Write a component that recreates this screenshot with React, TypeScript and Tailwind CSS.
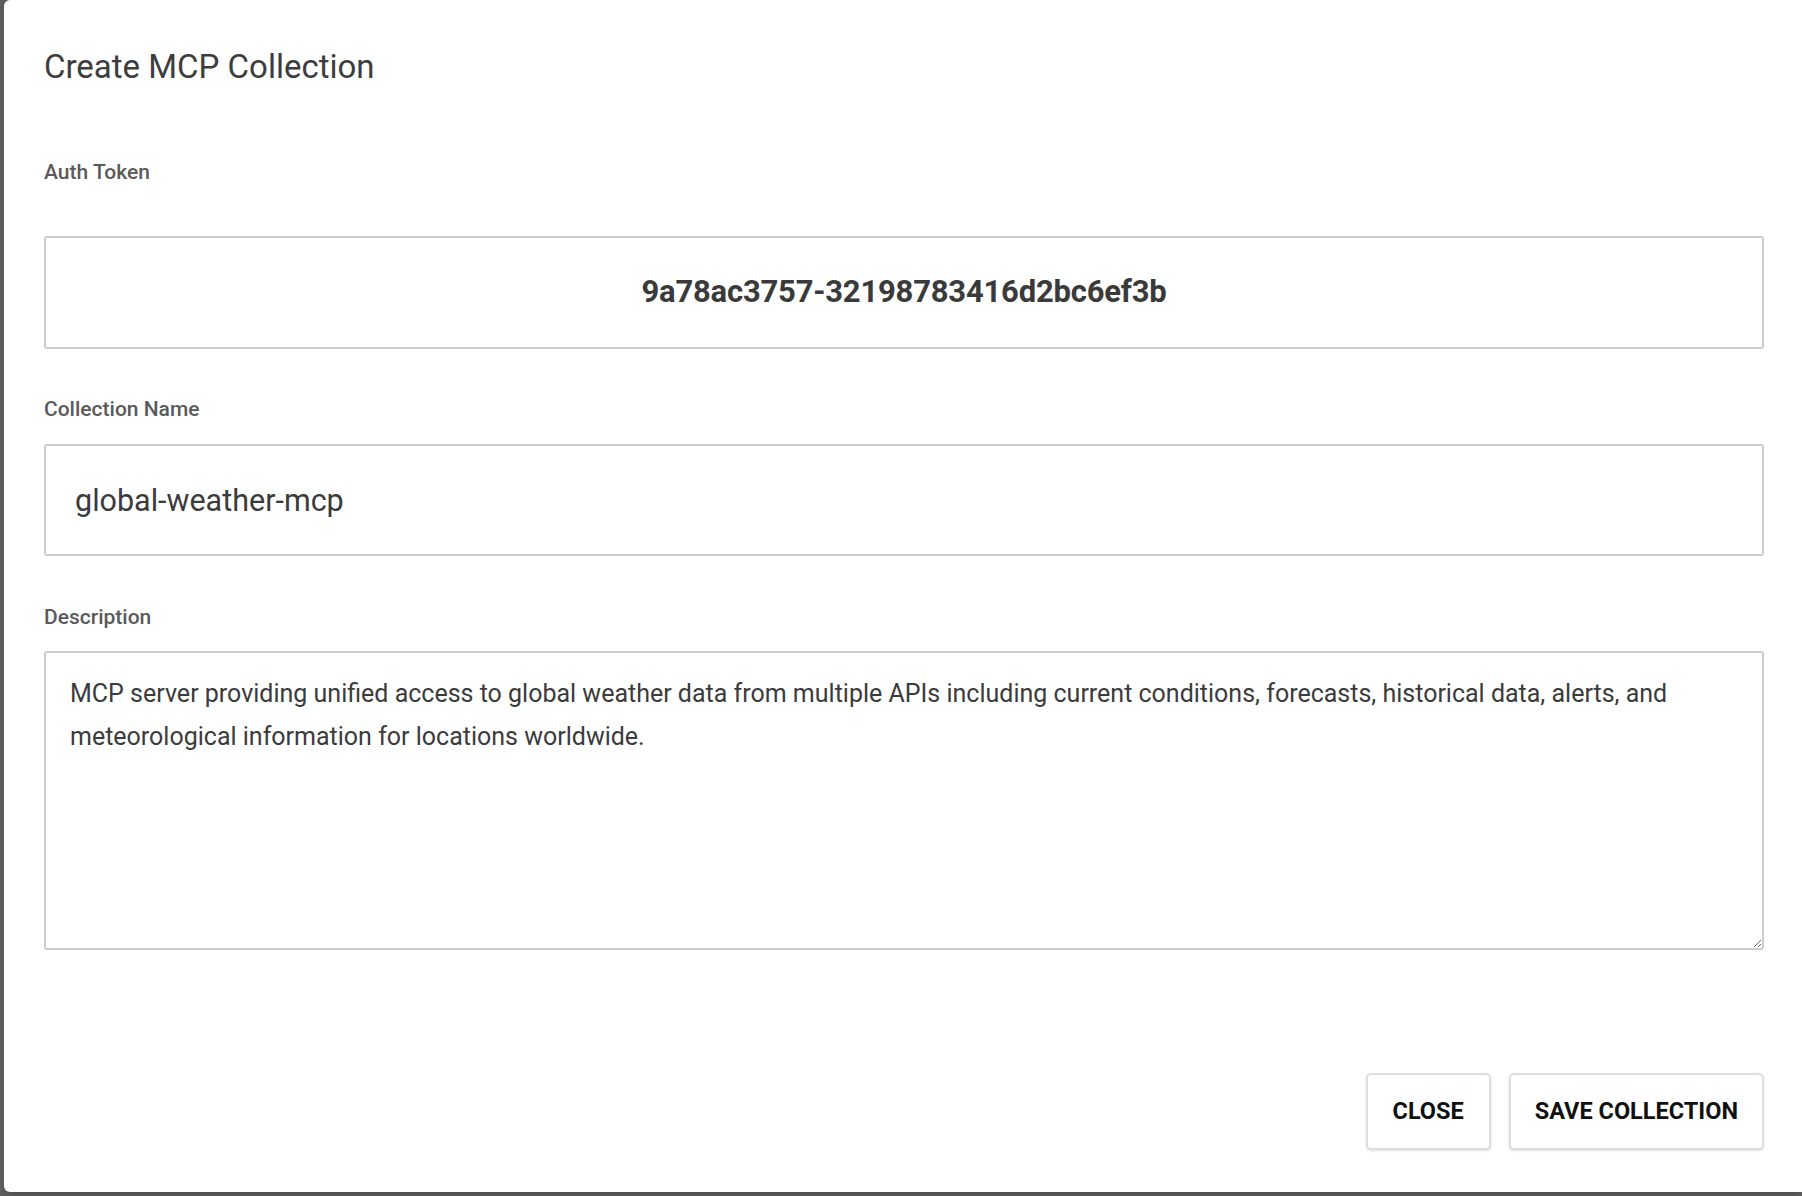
import { useState } from 'react';

const font = { fontFamily: 'Roboto, "Liberation Sans", sans-serif' };

export default function App() {
  const [name, setName] = useState('global-weather-mcp');
  const [desc, setDesc] = useState(
    'MCP server providing unified access to global weather data from multiple APIs including current conditions, forecasts, historical data, alerts, and meteorological information for locations worldwide.'
  );

  return (
    <div className="w-full h-[1196px] bg-[#5e5e5e] overflow-hidden" style={font}>
      <div className="ml-[4px] h-[1192px] bg-white rounded-l-[6px] shadow-md flex flex-col pl-[40px] pr-[38px] pt-[47px] pb-[42px]">
        <h2 className="text-[33px] leading-[40px] font-normal text-[#3d3d3d]">Create MCP Collection</h2>

        <label className="mt-[73px] text-[21px] leading-[24px] font-medium text-[#5a5a5a]">Auth Token</label>
        <div className="mt-[52px] h-[113px] border-2 border-[#cbcdd1] rounded-[3px] flex items-center justify-center">
          <span className="text-[31px] font-bold text-[#3a3a3a] tracking-[-0.2px]">9a78ac3757-32198783416d2bc6ef3b</span>
        </div>

        <label className="mt-[48px] text-[21px] leading-[24px] font-medium text-[#5a5a5a]">Collection Name</label>
        <input
          value={name}
          onChange={e => setName(e.target.value)}
          className="mt-[23px] h-[112px] border-2 border-[#cbcdd1] rounded-[3px] pl-[29px] text-[30.5px] text-[#3b3b3b] outline-none"
          style={font}
        />

        <label className="mt-[49px] text-[21px] leading-[24px] font-medium text-[#5a5a5a]">Description</label>
        <textarea
          value={desc}
          onChange={e => setDesc(e.target.value)}
          className="mt-[22px] h-[299px] border-2 border-[#cbcdd1] rounded-[3px] pl-[24px] pr-[24px] pt-[19px] text-[25px] leading-[43px] text-[#3b3b3b] outline-none resize-y"
          style={font}
        />

        <div className="mt-auto flex justify-end gap-[18px]">
          <button className="h-[77px] px-[25px] border-2 border-[#dedede] rounded-[5px] bg-white shadow-sm text-[23.5px] font-bold text-[#111] uppercase">
            Close
          </button>
          <button className="h-[77px] px-[24px] border-2 border-[#dedede] rounded-[5px] bg-white shadow-sm text-[23.5px] font-bold text-[#111] uppercase">
            Save Collection
          </button>
        </div>
      </div>
    </div>
  );
}
